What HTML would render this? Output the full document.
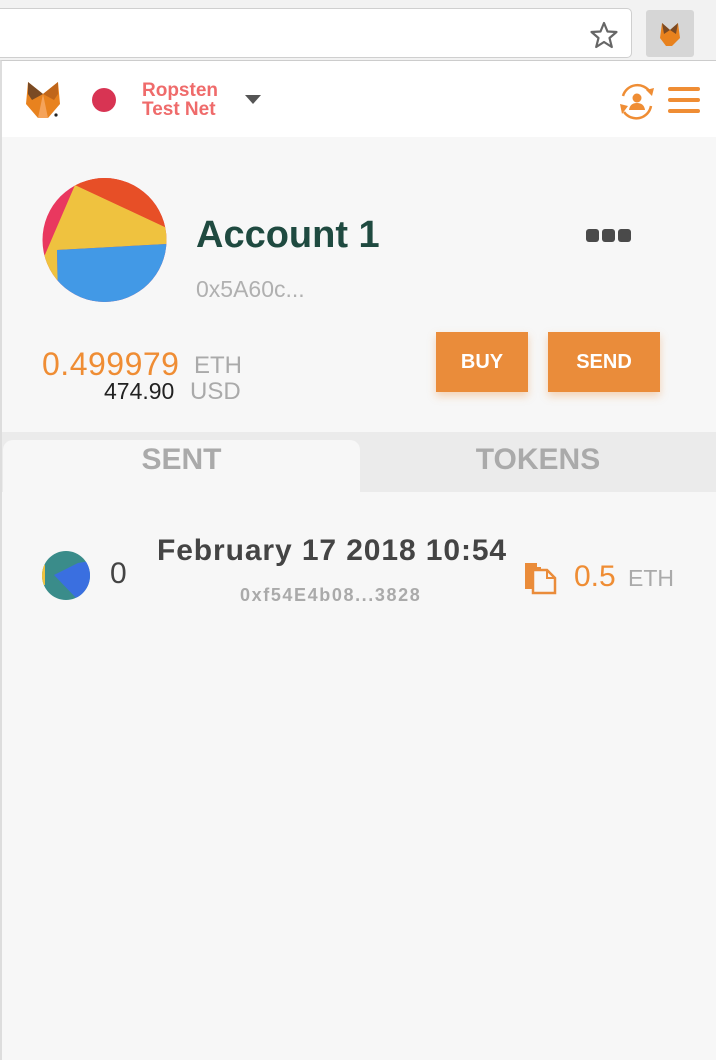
<!DOCTYPE html>
<html><head><style>
*{margin:0;padding:0;box-sizing:border-box}
body{width:716px;height:1060px;background:#f2f2f2;font-family:"Liberation Sans",sans-serif;position:relative;overflow:hidden}
.a{position:absolute}
</style></head><body>
<div class="a" style="left:-10px;top:8px;width:642px;height:50px;background:#fff;border:1px solid #cfcfcf;border-radius:5px"></div>
<svg class="a" style="left:588px;top:20px" width="32" height="30" viewBox="0 0 32 30"><polygon points="16,3 19.5,11.5 28.5,12 21.5,18 23.8,27 16,22 8.2,27 10.5,18 3.5,12 12.5,11.5" fill="none" stroke="#666" stroke-width="2.2" stroke-linejoin="round"/></svg>
<div class="a" style="left:646px;top:10px;width:48px;height:47px;background:#d6d6d6;border-radius:3px"></div>
<svg class="a" style="left:656px;top:20px" width="28" height="28" viewBox="0 0 28 28"><polygon points="6,3 14,10 22,3 24,18 16,26 10,26 4,18" fill="#e8821e"/><polygon points="6,3 14,10 8,14" fill="#7a4a24"/><polygon points="22,3 14,10 20,14" fill="#7a4a24"/></svg>
<div class="a" style="left:0;top:60px;width:716px;height:1000px;background:#f7f7f7;border-left:2px solid #ddd;border-top:1px solid #ccc"></div>
<div class="a" style="left:2px;top:61px;width:714px;height:76px;background:#fff"></div>
<svg class="a" style="left:24px;top:80px" width="38" height="40" viewBox="0 0 38 40"><polygon points="4,2 19,14 34,2 36,24 24,38 14,38 2,24" fill="#e8821e"/><polygon points="4,2 19,14 8,20 4,14" fill="#7a4a24"/><polygon points="34,2 19,14 30,20 34,14" fill="#c0661a"/><polygon points="19,14 14,38 24,38" fill="#f5a35a"/><circle cx="32" cy="35" r="1.6" fill="#222"/></svg>
<div class="a" style="left:92px;top:88px;width:24px;height:24px;border-radius:50%;background:#d83453"></div>
<div class="a" style="left:142px;top:81px;color:#ef6b6b;font-size:19px;font-weight:bold;line-height:19px">Ropsten<br>Test Net</div>
<svg class="a" style="left:245px;top:95px" width="18" height="10"><polygon points="0,0 16,0 8,9" fill="#555"/></svg>
<svg class="a" style="left:616px;top:82px" width="42" height="40" viewBox="0 0 42 40"><path d="M7 14 A15 15 0 0 1 34 10" fill="none" stroke="#ef8d34" stroke-width="2.5"/><path d="M35 24 A15 15 0 0 1 8 30" fill="none" stroke="#ef8d34" stroke-width="2.5"/><polygon points="30,8 38,6 36,14" fill="#ef8d34"/><polygon points="4,22 12,24 6,32" fill="#ef8d34"/><circle cx="21" cy="16" r="4.5" fill="#ef8d34"/><path d="M13 28 Q14 21 21 21 Q28 21 29 28 Z" fill="#ef8d34"/></svg>
<div class="a" style="left:668px;top:87px;width:32px;height:4px;background:#ef8d34;border-radius:2px"></div>
<div class="a" style="left:668px;top:98px;width:32px;height:4px;background:#ef8d34;border-radius:2px"></div>
<div class="a" style="left:668px;top:109px;width:32px;height:4px;background:#ef8d34;border-radius:2px"></div>
<svg class="a" style="left:42px;top:178px" width="125" height="124" viewBox="0 0 125 124"><defs><clipPath id="c"><ellipse cx="62.5" cy="62" rx="62" ry="62"/></clipPath></defs><g clip-path="url(#c)"><rect width="125" height="124" fill="#e9385f"/><polygon points="33,7 125,50 125,66 15,72 16,124 0,124 0,79 2,79" fill="#efc23f"/><polygon points="33,7 33,0 125,0 125,50" fill="#e74f27"/><polygon points="15,72 125,66 125,124 16,124" fill="#4299e6"/></g></svg>
<div class="a" style="left:196px;top:214px;color:#1f4a40;font-size:38px;font-weight:bold">Account 1</div>
<div class="a" style="left:196px;top:276px;color:#b0b0b0;font-size:23px">0x5A60c...</div>
<div class="a" style="left:586px;top:229px;width:46px;height:13px;"><span style="position:absolute;left:0;width:13px;height:13px;background:#4a4a4a;border-radius:3px"></span><span style="position:absolute;left:16px;width:13px;height:13px;background:#4a4a4a;border-radius:3px"></span><span style="position:absolute;left:32px;width:13px;height:13px;background:#4a4a4a;border-radius:3px"></span></div>
<div class="a" style="left:42px;top:346px;color:#ef8d34;font-size:32px;letter-spacing:0.5px">0.499979</div>
<div class="a" style="left:194px;top:352px;color:#aaa;font-size:24px">ETH</div>
<div class="a" style="left:104px;top:378px;color:#222;font-size:23px">474.90</div>
<div class="a" style="left:190px;top:378px;color:#aaa;font-size:24px">USD</div>
<div class="a" style="left:436px;top:332px;width:92px;height:60px;background:#ea8c3a;color:#fff;font-weight:bold;font-size:20px;text-align:center;line-height:60px;box-shadow:0 4px 8px rgba(234,140,58,.35)">BUY</div>
<div class="a" style="left:548px;top:332px;width:112px;height:60px;background:#ea8c3a;color:#fff;font-weight:bold;font-size:20px;text-align:center;line-height:60px;box-shadow:0 4px 8px rgba(234,140,58,.35)">SEND</div>
<div class="a" style="left:2px;top:432px;width:714px;height:60px;background:#ebebeb"></div>
<div class="a" style="left:3px;top:440px;width:357px;height:52px;background:#f7f7f7;border-radius:10px 10px 0 0"></div>
<div class="a" style="left:3px;top:443px;width:357px;text-align:center;color:#aaa;font-size:30px;font-weight:bold">SENT</div>
<div class="a" style="left:360px;top:443px;width:356px;text-align:center;color:#aaa;font-size:30px;font-weight:bold">TOKENS</div>
<svg class="a" style="left:42px;top:551px" width="48" height="49" viewBox="0 0 48 49"><defs><clipPath id="d"><ellipse cx="24" cy="24.5" rx="24" ry="24.5"/></clipPath></defs><g clip-path="url(#d)"><rect width="48" height="49" fill="#3a8c8a"/><polygon points="36,0 48,0 48,12" fill="#e0336a"/><polygon points="48,10 48,49 36,49 12,24 36,12" fill="#3a6fe0"/><rect x="0" y="14" width="3" height="20" fill="#efc23f"/></g></svg>
<div class="a" style="left:110px;top:557px;color:#444;font-size:30px">0</div>
<div class="a" style="left:157px;top:534px;color:#444;font-size:30px;font-weight:bold;letter-spacing:0.9px">February 17 2018 10:54</div>
<div class="a" style="left:240px;top:585px;color:#aaa;font-size:18px;font-weight:bold;letter-spacing:1.6px">0xf54E4b08...3828</div>
<svg class="a" style="left:523px;top:561px" width="34" height="34" viewBox="0 0 34 34"><path d="M2 2 H14 V6 H18 V28 H2 Z" fill="#ea8c3a"/><path d="M10 9 H24 L32 17 V32 H10 Z" fill="#f7f7f7" stroke="#ea8c3a" stroke-width="2.5"/><path d="M24 9 V17 H32" fill="none" stroke="#ea8c3a" stroke-width="2"/></svg>
<div class="a" style="left:574px;top:560px;color:#ef8d34;font-size:30px">0.5</div>
<div class="a" style="left:628px;top:565px;color:#aaa;font-size:23px">ETH</div>
</body></html>
